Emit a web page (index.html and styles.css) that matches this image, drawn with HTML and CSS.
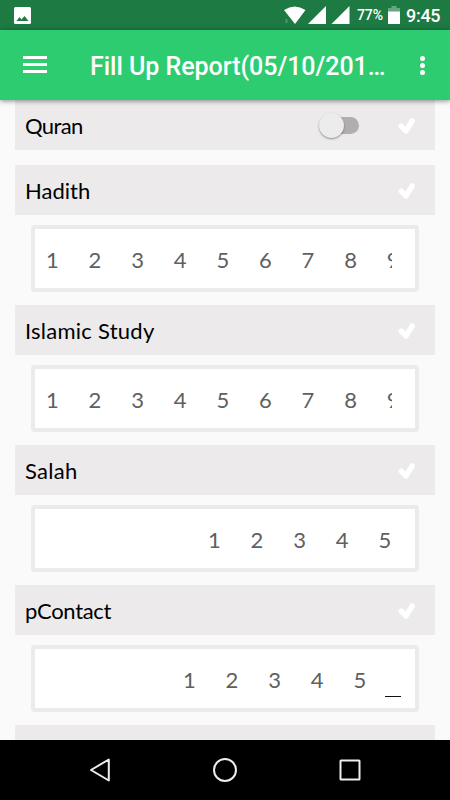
FILE: index.html
```html
<!DOCTYPE html>
<html lang="en">
<head>
  <meta charset="UTF-8" />
  <meta name="viewport" content="width=device-width, initial-scale=1.0" />
  <title>Fill Up Report</title>
  <link rel="stylesheet" href="styles.css">
</head>
<body>
  <svg class="defs">
    <symbol id="check" viewBox="0 0 18 18">
      <path d="M3.300 9.200 L8 14 L14.200 3.800" fill="none" stroke="#fff" stroke-width="5.400" stroke-linejoin="round" stroke-linecap="round" />
    </symbol>
  </svg>

  <div class="status-bar">
    <svg class="picture" width="17" height="17" viewBox="0 0 17 17">
      <rect width="17" height="17" rx="1.5" fill="#fff" />
      <path d="M2.500 14 L5.500 10 L7.500 12.500 L10.500 9 L14.500 14 Z" fill="#1d7a43" />
    </svg>
    <svg class="signals" width="66" height="19" viewBox="0 0 66 19">
      <path d="M0 4 Q10.500 -3 21.500 4 L11 18 Z M24 18 L42 0 V18 Z M47.500 18 L65.500 0 V18 Z" fill="#fff" />
      <path d="M2.500 13 V17" stroke="#4e966b" stroke-width="2" />
    </svg>
    <span class="percent">77%</span>
    <svg class="battery" width="12" height="18" viewBox="0 0 12 18">
      <path d="M3.500 0 H8.500 V2 H12 V6 H0 V2 H3.500 Z" fill="#66a57f" />
      <path d="M0 5.500 H12 V18 H0 Z" fill="#fff" />
    </svg>
    <span class="clock">9:45</span>
  </div>

  <div class="toolbar">
    <div class="menu"><i></i><i></i><i></i></div>
    <h1>Fill Up Report(05/10/201…</h1>
    <div class="more"><i></i><i></i><i></i></div>
  </div>

  <div class="report">
    <div class="row-header first">
      <h2 class="quran">Quran</h2>
      <div class="switch"><i></i></div>
      <svg class="check"><use href="#check" /></svg>
    </div>

    <div class="row-header">
      <h2 class="hadith">Hadith</h2>
      <svg class="check"><use href="#check" /></svg>
    </div>
    <div class="picker">
      <ul>
        <li>1</li><li>2</li><li>3</li><li>4</li><li>5</li><li>6</li><li>7</li><li>8</li><li>9</li>
      </ul>
    </div>

    <div class="row-header">
      <h2 class="study">Islamic Study</h2>
      <svg class="check"><use href="#check" /></svg>
    </div>
    <div class="picker">
      <ul>
        <li>1</li><li>2</li><li>3</li><li>4</li><li>5</li><li>6</li><li>7</li><li>8</li><li>9</li>
      </ul>
    </div>

    <div class="row-header">
      <h2 class="salah">Salah</h2>
      <svg class="check"><use href="#check" /></svg>
    </div>
    <div class="picker salah-picker">
      <ul>
        <li>1</li><li>2</li><li>3</li><li>4</li><li>5</li>
      </ul>
    </div>

    <div class="row-header">
      <h2 class="contact">pContact</h2>
      <svg class="check"><use href="#check" /></svg>
    </div>
    <div class="picker contact-picker">
      <ul>
        <li>1</li><li>2</li><li>3</li><li>4</li><li>5</li>
      </ul>
      <div class="entry"></div>
    </div>

    <div class="row-header"></div>
  </div>

  <div class="nav-bar">
    <svg width="26" height="26" viewBox="0 0 26 26"><path d="M4 13 L21.800 2.500 V23.500 Z" /></svg>
    <svg width="26" height="26" viewBox="0 0 26 26"><circle cx="13" cy="13" r="11" /></svg>
    <svg width="26" height="26" viewBox="0 0 26 26"><rect x="3.500" y="3.500" width="19" height="19" rx="0.500" /></svg>
  </div>
</body>
</html>
```

FILE: styles.css
```css
* {
  box-sizing: border-box;
}
body {
  margin: 0;
  height: 100vh;
  display: flex;
  flex-direction: column;
  overflow: hidden;
  background: #fafafa;
  font-family: Roboto, sans-serif;
}
.defs {
  display: none;
}
svg {
  display: block;
  flex: none;
}
.status-bar {
  height: 30px;
  flex: none;
  display: flex;
  align-items: center;
  padding: 0 10px 0 14px;
  background: #1d7a43;
  color: #fff;
}
.signals {
  margin-left: auto;
}
.percent {
  width: 27px;
  margin-left: 7px;
  font-size: 14px;
  font-weight: 500;
  letter-spacing: -0.1px;
}
.battery {
  margin-left: 4px;
}
.clock {
  width: 34px;
  margin-left: 6px;
  font-size: 18px;
  font-weight: 500;
  letter-spacing: -0.3px;
  white-space: nowrap;
}
.toolbar {
  position: relative;
  height: 70px;
  flex: none;
  display: flex;
  align-items: center;
  padding: 0 25px 0 23px;
  background: #2ecc71;
  box-shadow: 0 1px 5px rgba(0, 0, 0, 0.45);
  color: #fff;
}
.toolbar i {
  display: block;
  background: #fff;
}
.menu {
  margin-top: -1px;
}
.menu i {
  width: 24px;
  height: 2.5px;
}
.menu i + i {
  margin-top: 4.5px;
}
.toolbar h1 {
  margin: 2px 0 0 43px;
  font-size: 25px;
  font-weight: 500;
  letter-spacing: -0.03px;
  white-space: nowrap;
}
.more {
  margin-left: auto;
}
.more i {
  width: 5px;
  height: 5px;
  border-radius: 50%;
}
.more i + i {
  margin-top: 2px;
}
.report {
  flex: 1;
  min-height: 0;
  overflow: hidden;
  padding: 0 15px;
}
.row-header {
  height: 50px;
  display: flex;
  align-items: center;
  padding: 0 19px 0 10px;
  background: #eceaeb;
}
.row-header.first {
  margin-bottom: 15px;
}
.row-header h2 {
  margin: 0 auto 0 0;
  font-family: "Coming Soon", Lato, sans-serif;
  font-size: 22px;
  font-weight: 400;
  color: #000;
  white-space: nowrap;
}
.row-header .quran {
  letter-spacing: -0.6px;
}
.row-header .study {
  letter-spacing: 0.25px;
}
.row-header .salah {
  letter-spacing: 0.3px;
}
.row-header .contact {
  letter-spacing: -0.3px;
}
.check {
  width: 18px;
  height: 18px;
  margin-top: 2px;
}
.switch {
  width: 40px;
  height: 25px;
  margin-right: 39px;
  padding: 4px 0 4px 10px;
}
.switch::before {
  content: "";
  display: block;
  height: 17px;
  border-radius: 9px;
  background: #b0aeaf;
}
.switch i {
  display: block;
  width: 25px;
  height: 25px;
  margin: -21px 0 0 -10px;
  border-radius: 50%;
  background: #ececec;
  box-shadow: 0 1px 2px rgba(0, 0, 0, 0.4);
}
.picker {
  height: 67px;
  margin: 10px 16px 13px;
  display: flex;
  align-items: center;
  padding: 2px 23px 0 11px;
  background: #fff;
  border: 4px solid #eceaeb;
  border-radius: 4px;
}
.picker ul {
  flex: 1;
  min-width: 0;
  display: flex;
  overflow: hidden;
  margin: 0;
  padding: 0;
  list-style: none;
}
.picker li {
  width: 42.6px;
  flex: none;
  font-family: "Coming Soon", Lato, sans-serif;
  font-size: 22px;
  color: #606060;
}
.salah-picker {
  padding-left: 173px;
}
.contact-picker {
  padding-left: 148px;
  padding-right: 14px;
}
.entry {
  width: 16px;
  height: 1px;
  margin-top: 33px;
  background: #111;
}
.nav-bar {
  height: 60px;
  flex: none;
  display: flex;
  align-items: center;
  justify-content: space-between;
  padding: 0 87px;
  background: #000;
}
.nav-bar svg {
  fill: none;
  stroke: #eee;
  stroke-width: 2;
  stroke-linejoin: round;
}
```
